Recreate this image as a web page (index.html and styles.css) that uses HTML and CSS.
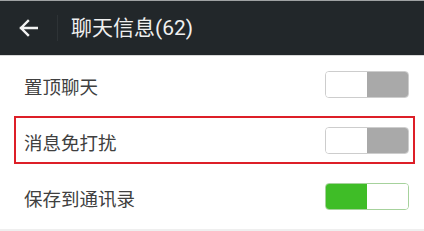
FILE: index.html
```html
<!DOCTYPE html>
<html>
<head>
<meta charset="utf-8">
<link rel="stylesheet" href="styles.css">
</head>
<body>
<div class="screen">
  <header class="bar">
    <span class="back">
      <svg width="20" height="18" viewBox="0 0 20 18"><path d="M19 9H3M10 2L3 9l7 7" fill="none" stroke="#f2f2f2" stroke-width="2.4" stroke-linecap="square"/></svg>
    </span>
    <span class="sep"></span>
    <span class="title">聊天信息(62)</span>
  </header>
  <div class="list">
    <div class="row">
      <span class="label">置顶聊天</span>
      <span class="toggle off"><i class="a"></i><i class="b"></i></span>
    </div>
    <div class="row marked">
      <span class="label">消息免打扰</span>
      <span class="toggle off"><i class="a"></i><i class="b"></i></span>
      <span class="mark"></span>
    </div>
    <div class="row">
      <span class="label">保存到通讯录</span>
      <span class="toggle on"><i class="a"></i><i class="b"></i></span>
    </div>
  </div>
  <div class="gap"></div>
  <div class="foot"></div>
</div>
</body>
</html>
```
FILE: styles.css
```css
html, body { margin: 0; padding: 0; background: #fff; }
.screen { width: 424px; height: 231px; overflow: hidden; font-family: "Noto Sans CJK SC", "Roboto", sans-serif; }
.bar { height: 54px; background: #22272a; border-top: 1px solid #9fa2a3; border-bottom: 1px solid #d8d8d8; display: flex; align-items: center; box-sizing: content-box; }
.back { width: 20px; height: 18px; margin-left: 18px; display: flex; }
.sep { width: 1px; height: 26px; background: #2e3336; margin-left: 19px; }
.title { margin-left: 13px; color: #f0f0f0; font-size: 21px; font-family: "Roboto", "Noto Sans CJK SC", sans-serif; line-height: 1; }
.list { display: flex; flex-direction: column; }
.row { height: 56px; display: flex; align-items: center; justify-content: space-between; padding: 0 15px 0 24px; position: relative; }
.label { font-size: 18.5px; color: #404040; line-height: 1; margin-top: 4px; }
.toggle { width: 82px; height: 25px; border: 1px solid #cdcdcd; border-radius: 4px; overflow: hidden; display: flex; }
.toggle i { flex: 1; display: block; }
.toggle.off .a { background: #fff; }
.toggle.off .b { background: #a9a9a9; }
.toggle.on { border-color: #a6d29c; }
.toggle.on .a { background: #3fbd27; }
.toggle.on .b { background: #fff; }
.mark { position: absolute; left: 14px; right: 9px; top: 4px; bottom: 4px; border: 2px solid #dd1f28; }
.gap { height: 5px; }
.foot { height: 10px; background: #efefef; }
```
